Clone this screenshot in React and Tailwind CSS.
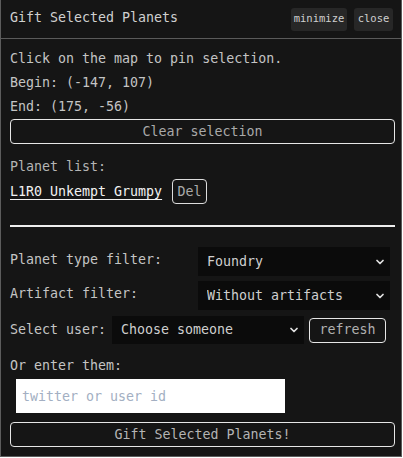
import React, { useState } from "react";
import { ChevronDown } from "lucide-react";

const mono = "font-['DejaVu_Sans_Mono','Liberation_Mono',monospace]";

function Select({ value, options, className }) {
  return (
    <div className={`relative bg-[#0b0b0b] ${className}`}>
      <select
        defaultValue={value}
        className={`appearance-none w-full h-full bg-transparent text-[#cfcfcf] pl-[9px] pr-6 outline-none ${mono} text-[13.3px]`}
      >
        {options.map((o) => (
          <option key={o} value={o}>
            {o}
          </option>
        ))}
      </select>
      <ChevronDown
        size={12}
        strokeWidth={3.5}
        className="absolute right-[4px] top-1/2 -translate-y-1/2 text-[#e0e0e0] pointer-events-none"
      />
    </div>
  );
}

export default function App() {
  const [user, setUser] = useState("");

  return (
    <div
      className={`w-[402px] h-[457px] bg-[#151515] border-x border-b border-[#5c5c5c] text-[13.3px] text-[#c4c4c4] ${mono}`}
    >
      {/* header */}
      <div className="h-[39px] flex items-center justify-between pl-[9px] pr-[8px] border-b border-[#5a5a5a]">
        <span className="text-[#d0d0d0] pb-[2px]">Gift Selected Planets</span>
        <div className="flex gap-[7px] text-[10.5px] text-[#cfcfcf]">
          <button className="h-[23px] w-[56px] rounded-[3px] bg-[#272727]">minimize</button>
          <button className="h-[23px] w-[39px] rounded-[3px] bg-[#272727]">close</button>
        </div>
      </div>

      <div className="pl-[9px] pr-[6px] pt-[8px]">
        <div className="h-[24px] leading-[24px]">Click on the map to pin selection.</div>
        <div className="h-[24px] leading-[24px]">Begin: (-147, 107)</div>
        <div className="h-[23px] leading-[23px]">End: (175, -56)</div>

        <button className="mt-[1px] w-[385px] h-[25px] rounded-[4px] border border-[#e6e6e6] text-[#a9a9a9]">
          Clear selection
        </button>

        <div className="mt-[11px] h-[24px] leading-[24px] text-[#b4b4b4]">Planet list:</div>
        <div className="flex items-center h-[25px] gap-[10px]">
          <span className="text-[#f2f2f2] underline underline-offset-[3px]">L1R0 Unkempt Grumpy</span>
          <button className="h-[25px] w-[35px] rounded-[4px] border border-[#dcdcdc] text-[#a9a9a9]">
            Del
          </button>
        </div>

        <div className="mt-[21px] w-[385px] h-[2px] bg-[#eeeeee]" />

        <div className="mt-[20px] flex items-center h-[29px]">
          <span className="w-[188px] pb-[4px]">Planet type filter:</span>
          <Select value="Foundry" options={["Any", "Planet", "Asteroid Field", "Foundry", "Spacetime Rip", "Quasar"]} className="w-[192px] h-[29px]" />
        </div>
        <div className="mt-[5px] flex items-center h-[29px]">
          <span className="w-[188px] pb-[4px]">Artifact filter:</span>
          <Select value="Without artifacts" options={["Any", "With artifacts", "Without artifacts"]} className="w-[192px] h-[29px]" />
        </div>
        <div className="mt-[6px] flex items-center h-[28px]">
          <span className="w-[102px]">Select user:</span>
          <Select value="Choose someone" options={["Choose someone"]} className="w-[192px] h-[28px]" />
          <button className="ml-[5px] w-[77px] h-[25px] rounded-[4px] border border-[#e6e6e6] text-[#b0b0b0]">
            refresh
          </button>
        </div>

        <div className="mt-[10px] h-[24px] leading-[24px]">Or enter them:</div>
        <input
          value={user}
          onChange={(e) => setUser(e.target.value)}
          placeholder="twitter or user id"
          className={`mt-[1px] ml-[6px] block w-[269px] h-[34px] bg-white text-black pl-[6px] outline-none placeholder:text-[#a3afc2] ${mono} text-[13.3px]`}
        />

        <button className="mt-[9px] w-[385px] h-[25px] rounded-[4px] border border-[#e6e6e6] text-[#b4b4b4]">
          Gift Selected Planets!
        </button>
      </div>
    </div>
  );
}
